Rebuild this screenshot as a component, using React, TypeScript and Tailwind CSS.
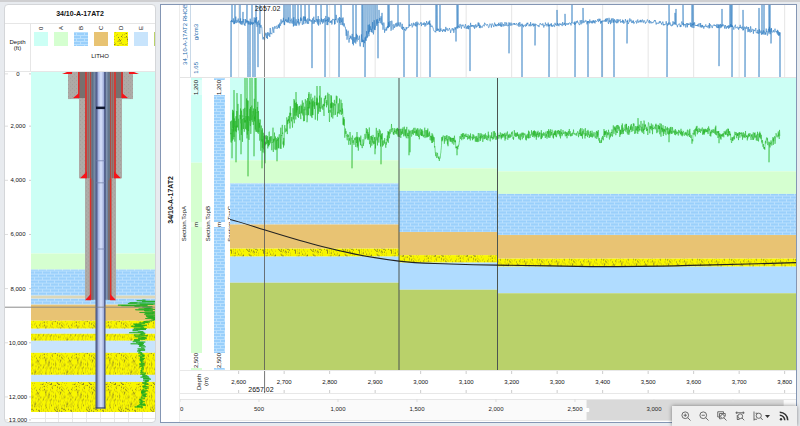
import React from "react";

type Knot = [number, number, number];
type Point = [number, number];

const COLORS = {
  teal: "#ccfff5",
  green: "#d5ffd0",
  tan: "#e8c373",
  blue: "#b0dcff",
  paleBlue: "#c8e4fc",
  olive: "#b9d16a",
};

function makeRandom(seed: number) {
  let s = seed;
  return () => {
    s = (s + 0x6d2b79f5) | 0;
    let t = Math.imul(s ^ (s >>> 15), 1 | s);
    t = (t + Math.imul(t ^ (t >>> 7), 61 | t)) ^ t;
    return ((t ^ (t >>> 14)) >>> 0) / 4294967296;
  };
}

/* Builds a log curve: noise round a baseline, plus single excursions. */
function buildLog(knots: Knot[], spikes: Point[], step: number, seed: number): Point[] {
  const rnd = makeRandom(seed);
  const pts: Point[] = [];
  const at = (p: number): Point => {
    for (let i = 1; i < knots.length; i++) {
      const [a, va, na] = knots[i - 1];
      const [b, vb, nb] = knots[i];
      if (p <= b) {
        const t = (p - a) / (b - a);
        return [va + (vb - va) * t, na + (nb - na) * t];
      }
    }
    const last = knots[knots.length - 1];
    return [last[1], last[2]];
  };
  for (let p = knots[0][0]; p <= knots[knots.length - 1][0]; p += step) {
    const [v, n] = at(p);
    pts.push([p, v + (rnd() + rnd() - 1) * n]);
  }
  for (const [p, v] of spikes) {
    pts.push([p - 0.2, at(p)[0]], [p, v], [p + 0.2, at(p)[0]]);
  }
  return pts.sort((a, b) => a[0] - b[0]);
}

const toPath = (pts: Point[], swap = false) =>
  "M" + pts.map(([a, b]) => (swap ? `${b.toFixed(1)} ${a.toFixed(1)}` : `${a.toFixed(1)} ${b.toFixed(1)}`)).join("L");

const up = (xs: number[], y = 4): Point[] => xs.map((x) => [x, y]);

const densityPath = toPath(
  buildLog(
    [
      [231, 22, 6], [258, 23, 7], [261, 30, 8], [264, 40, 7], [270, 34, 7], [277, 27, 6], [285, 21, 6], [300, 21, 6],
      [343, 20, 6], [347, 36, 8], [352, 40, 8], [364, 40, 9], [368, 32, 9], [375, 28, 10], [380, 18, 10], [385, 32, 10],
      [390, 26, 6], [400, 26, 5], [405, 30, 3], [411, 25, 3], [430, 24, 4], [434, 31, 3], [454, 30, 4], [457, 27, 4],
      [500, 25, 3], [555, 25, 3], [572, 23, 3], [610, 21, 4], [650, 22, 3], [680, 25, 4], [730, 27, 3], [750, 30, 4],
      [762, 33, 4], [770, 32, 6], [780, 33, 5],
    ],
    [
      ...up([232, 235, 240, 247, 252, 256, 260, 284, 286, 288, 290, 293, 295, 298, 301, 305, 309, 316, 321, 327, 335, 341]),
      ...up([353, 356, 362, 363, 365, 367, 369, 371, 373, 375, 377, 388, 389, 398, 409, 436, 437, 440, 457, 458]),
      ...up([572, 669, 683, 692, 693, 730, 731, 732, 762, 764, 769, 770]),
      [243, 12], [379, 10], [382, 13], [557, 10], [565, 14], [583, 8], [676, 9], [722, 9], [743, 10], [759, 8], [675, 13],
      [231, 78], [248, 78], [250, 78], [253, 78], [255, 78], [258, 68], [312, 69], [325, 78], [339, 78], [365, 78],
      [378, 59], [404, 78], [417, 78], [430, 78], [456, 42], [470, 72], [509, 54], [522, 78], [535, 46], [549, 78],
      [575, 78], [588, 78], [602, 78], [614, 78], [627, 44], [667, 78], [719, 67], [732, 78], [745, 78], [759, 78],
      [771, 44], [780, 78],
    ],
    0.4,
    17,
  ),
);

const gammaPath = toPath(
  buildLog(
    [
      [230, 130, 26], [238, 124, 24], [246, 122, 28], [258, 118, 28], [261, 138, 16], [265, 142, 14], [278, 140, 14],
      [284, 137, 14], [287, 122, 14], [292, 113, 16], [300, 112, 18], [312, 107, 17], [320, 104, 17], [332, 108, 16],
      [342, 111, 14], [346, 138, 10], [352, 139, 10], [363, 143, 10], [366, 131, 12], [372, 142, 10], [379, 135, 12],
      [386, 142, 11], [391, 130, 7], [396, 131, 7], [408, 133, 7], [412, 132, 6], [428, 134, 7], [434, 140, 7],
      [436, 155, 5], [440, 159, 5], [442, 139, 6], [455, 140, 6], [457, 150, 5], [460, 137, 5], [500, 136, 6],
      [570, 133, 6], [598, 134, 6], [600, 144, 4], [604, 134, 6], [610, 134, 6], [615, 130, 7], [640, 128, 8],
      [660, 129, 8], [666, 131, 6], [690, 133, 5], [692, 142, 4], [694, 131, 6], [716, 131, 6], [720, 136, 5],
      [730, 132, 5], [731, 142, 4], [735, 135, 5], [761, 137, 6], [764, 147, 5], [767, 137, 6], [769, 145, 5],
      [773, 140, 6], [780, 134, 6],
    ],
    [
      ...up([245, 247, 250, 252, 255, 256], 78),
      [234, 90], [237, 93], [241, 94], [232, 158], [236, 162], [241, 154], [248, 176], [254, 156], [262, 168], [265, 163],
      [277, 161], [296, 92], [309, 92], [317, 86], [320, 86], [331, 95], [352, 168], [375, 154], [381, 164], [409, 155],
      [410, 152], [448, 146], [457, 155], [638, 118], [669, 142], [719, 143], [769, 162],
    ],
    0.25,
    5,
  ),
);

const leftLogPath = toPath(
  buildLog(
    [
      [299, 150, 12], [302, 146, 26], [304, 140, 36], [307, 146, 26], [312, 150, 16], [319, 153, 8], [321, 146, 6],
      [323, 139, 9], [328, 141, 12], [333, 139, 10], [338, 143, 9], [342, 137, 10], [345, 141, 5], [360, 142, 4],
      [373, 143, 4], [378, 146, 6], [384, 145, 5], [395, 143, 5], [402, 141, 5], [405, 139, 8], [407, 141, 3],
    ],
    [],
    0.25,
    29,
  ),
  true,
);

const speckRandom = makeRandom(91);
const SPECKS = Array.from({ length: 300 }, () => [
  Math.floor(speckRandom() * 32),
  Math.floor(speckRandom() * 32),
  speckRandom() > 0.75 ? 0 : 1,
]);

function Patterns({ id }: { id: string }) {
  return (
    <defs>
      <pattern id={`${id}-brick`} width="8" height="6" patternUnits="userSpaceOnUse">
        <rect width="8" height="6" fill="#99cffb" />
        <path d="M0 .5H8M0 3.5H8M2.5 1V3M6.5 4V6" stroke="#b9e0fe" strokeWidth="1" />
      </pattern>
      <pattern id={`${id}-sand`} width="32" height="32" patternUnits="userSpaceOnUse">
        <rect width="32" height="32" fill="#f8f600" />
        {SPECKS.map(([x, y, k], i) => (
          <rect key={i} x={x} y={y} width="1" height="1" fill={k ? "#d2ca10" : "#8c861f"} />
        ))}
      </pattern>
      <linearGradient id={`${id}-pipe`}>
        <stop offset="0" stopColor="#46527c" />
        <stop offset="0.14" stopColor="#5b6898" />
        <stop offset="0.3" stopColor="#a9b8e4" />
        <stop offset="0.55" stopColor="#d9e3fb" />
        <stop offset="0.8" stopColor="#a6b4df" />
        <stop offset="0.88" stopColor="#5b6898" />
        <stop offset="1" stopColor="#46527c" />
      </linearGradient>
      <linearGradient id={`${id}-casing`}>
        <stop offset="0" stopColor="#8c8580" />
        <stop offset="0.12" stopColor="#5d7086" />
        <stop offset="0.25" stopColor="#8296b4" />
        <stop offset="0.36" stopColor="#3c4d6b" />
        <stop offset="0.64" stopColor="#3c4d6b" />
        <stop offset="0.76" stopColor="#8296b4" />
        <stop offset="0.88" stopColor="#5d7086" />
        <stop offset="1" stopColor="#8c8580" />
      </linearGradient>
      <pattern id={`${id}-cement`} width="4" height="4" patternUnits="userSpaceOnUse">
        <rect width="4" height="4" fill="#aeaaa6" />
        <path d="M0 0h1v1H0zM2 2h1v1H2z" fill="#a29e9a" />
      </pattern>
    </defs>
  );
}

const LEFT_LAYERS: [number, number, string][] = [
  [72, 253, COLORS.teal],
  [253, 269, COLORS.green],
  [269, 295, "url(#well-brick)"],
  [295, 298, "#dcd7b8"],
  [298, 304, "url(#well-brick)"],
  [304, 320, COLORS.tan],
  [320, 328, "url(#well-sand)"],
  [328, 333, COLORS.paleBlue],
  [333, 340, "url(#well-sand)"],
  [340, 352, COLORS.paleBlue],
  [352, 374, "url(#well-sand)"],
  [374, 381, COLORS.paleBlue],
  [381, 411, "url(#well-sand)"],
];

function WellSchematic() {
  return (
    <svg className="h-full min-w-0 flex-1" viewBox="31 72 124 349" preserveAspectRatio="none">
      <Patterns id="well" />
      <path d="M45.5 411V421M58.5 411V421M72.5 411V421M86.5 411V421M100.5 411V421M114.5 411V421M128.5 411V421M142.5 411V421M31 417.5H155" stroke="#e8e8e8" fill="none" />
      {LEFT_LAYERS.map(([a, b, fill]) => (
        <rect key={a} x="31" y={a} width="124" height={b - a} fill={fill} />
      ))}
      <rect x="68" y="72" width="65" height="27" fill="url(#well-cement)" />
      <rect x="79" y="72" width="43" height="106" fill="url(#well-cement)" />
      <rect x="85" y="178" width="31" height="121" fill="url(#well-cement)" />
      <rect x="78" y="72" width="45" height="26" fill="#77706e" />
      <path d="M78.8 72V98M122 72V98" stroke="#ee2320" strokeWidth="1.4" />
      <rect x="85" y="72" width="31" height="106" fill="#8a7f7b" />
      <path d="M86 72V178M115 72V178" stroke="#f0201c" strokeWidth="1.4" />
      <path d="M88.3 72V178M112.6 72V178" stroke="#9a625c" strokeWidth="1" />
      <rect x="90" y="72" width="21.5" height="227" fill="url(#well-casing)" />
      <path d="M90.6 72V178M110.6 72V178" stroke="#b5433d" strokeWidth="1" />
      <path d="M90.6 178V299M110.6 178V299" stroke="#e02f29" strokeWidth="1.6" />
      <path d="M92.6 180V299M108.8 180V299" stroke="#7c6c6c" strokeWidth="1.6" />
      <path d="M62 74L67 72H72V74ZM139 74L134 72H129V74ZM73 98L79 93V98ZM128 98L122 93V98ZM80 178L87 171V178ZM121 178L114 171V178ZM85 299.500L91 293V299.500ZM116 299.500L110 293V299.500Z" fill="#f5141a" />
      <rect x="95.500" y="72" width="10" height="335.500" fill="url(#well-pipe)" />
      <path d="M95.500 407H105.500" stroke="#3a4468" strokeWidth="1.2" />
      <rect x="96" y="106.500" width="9" height="2.500" fill="#101830" />
      <path d="M96 160.500H105M96 182.500H105M96 248.500H105" stroke="#6d7ba6" strokeWidth=".7" />
      <path d={leftLogPath} stroke="#1fae1f" strokeWidth=".7" fill="none" />
      <path d="M31 306.500H155" stroke="#7b7b7b" strokeWidth=".8" />
    </svg>
  );
}

function Brick() {
  return (
    <svg className="h-full w-full">
      <Patterns id="swatch" />
      <rect width="100%" height="100%" fill="url(#swatch-brick)" />
    </svg>
  );
}

function Sand() {
  return (
    <svg className="h-full w-full">
      <Patterns id="grain" />
      <rect width="100%" height="100%" fill="url(#grain-sand)" />
    </svg>
  );
}

const LEGEND: { name: string; box: string; fill?: React.ReactNode }[] = [
  { name: "0", box: "bg-[#ccfff5]" },
  { name: "A", box: "bg-[#d5ffd0]" },
  { name: "B", box: "bg-[#9fd3fb]", fill: <Brick /> },
  { name: "C", box: "bg-[#e8c373]" },
  { name: "D", box: "bg-[#f4f000]", fill: <Sand /> },
  { name: "E", box: "bg-[#c8e4fc]" },
  { name: "", box: "bg-[#b9d16a]" },
];

const DEPTHS_FT = [0, 2000, 4000, 6000, 8000, 10000, 12000, 13000];

function WellPanel() {
  return (
    <aside className="ml-1 flex w-[152px] shrink-0 flex-col rounded-sm border border-[#d4d6d9] bg-white">
      <h2 className="h-[19px] border-b border-[#e6e6e6] text-center text-[7px] leading-[18px] font-bold text-[#111]">34/10-A-17AT2</h2>
      <div className="flex h-12 border-b border-[#e6e6e6]">
        <div className="flex w-[26px] shrink-0 flex-col justify-center border-r border-[#e6e6e6] pb-[6px] text-center text-[6px] leading-[6px] text-[#111]">
          <span>Depth</span>
          <span>(ft)</span>
        </div>
        <div className="min-w-0 flex-1 overflow-hidden">
          <ul className="flex gap-[6px] pl-[3px]">
            {LEGEND.map((item) => (
              <li key={item.box} className="flex w-[14px] shrink-0 flex-col items-center">
                <span className="h-2 rotate-180 text-center text-[6px] leading-[14px] text-[#111] [writing-mode:vertical-rl]">
                  {item.name}
                </span>
                <span className={`h-[14px] w-[14px] overflow-hidden ${item.box}`}>{item.fill}</span>
              </li>
            ))}
          </ul>
          <p className="pt-1 pl-[14px] text-center text-[6px] leading-3 text-[#111]">LITHO</p>
        </div>
      </div>
      <div className="flex min-h-0 flex-1">
        <svg className="h-full w-[26px] shrink-0" fontSize="6" fill="#111">
          {DEPTHS_FT.map((d) => {
            const y = `${(Math.min(Math.max(d, 70), 12850) * 2.7) / 349}%`;
            return (
              <g key={d}>
                <line x1="0" x2="3" y1={y} y2={y} stroke="#ddd" />
                <line x1="24" x2="26" y1={y} y2={y} stroke="#ccc" />
                <text x="13" y={y} textAnchor="middle" dominantBaseline="central">
                  {d.toLocaleString("en-US")}
                </text>
              </g>
            );
          })}
          <line x1="0" x2="26" y1="67.2%" y2="67.2%" stroke="#8a8a8a" />
        </svg>
        <WellSchematic />
      </div>
    </aside>
  );
}

const depthX = (m: number) => `${(((m - 2581) * 0.455) / 566) * 100}%`;
const DEPTHS_M = Array.from({ length: 13 }, (_, i) => 2600 + i * 100);

function DensityTrack() {
  return (
    <div className="flex h-[73px] shrink-0 border-b border-[#e4e4e4] text-[6px] text-[#1767ab]">
      <div className="flex w-[11px] shrink-0 flex-col items-center justify-end overflow-hidden border-r border-[#c9d9e8] pb-3">
        <span className="shrink-0 rotate-180 leading-[10px] whitespace-nowrap [writing-mode:vertical-rl]">34_10-A-17AT2 RHOB</span>
      </div>
      <div className="flex w-[39px] shrink-0 flex-col justify-end gap-[22px] pb-[3px]">
        <span className="rotate-180 self-start leading-[11px] [writing-mode:vertical-rl]">g/cm3</span>
        <span className="rotate-180 self-start leading-[11px] [writing-mode:vertical-rl]">1.65</span>
      </div>
      <div className="relative min-w-0 flex-1">
        <svg className="block h-full w-full" viewBox="230 5 566 73" preserveAspectRatio="none">
          {DEPTHS_M.map((m) => (
            <path key={m} d={`M${230 + (m - 2581) * 0.455} 5V78`} stroke="#e6e6e6" />
          ))}
          <path d={densityPath} stroke="#2f7dc2" strokeWidth=".6" fill="none" />
          <path d="M264.500 5V78" stroke="#666" strokeWidth=".8" />
        </svg>
        <svg className="absolute inset-0 h-full w-full" fontSize="7" fill="#111">
          <text x={depthX(2664)} y="6" textAnchor="middle">2657.02</text>
        </svg>
      </div>
    </div>
  );
}

function ScaleStrip({ brick }: { brick?: boolean }) {
  return (
    <div className="relative w-[11px] shrink-0">
      <svg className="absolute inset-0 h-full w-full">
        {brick ? (
          <>
            <Patterns id="strip" />
            <rect width="100%" height="100%" fill="url(#strip-brick)" />
          </>
        ) : (
          <>
            <rect width="100%" height="29%" fill={COLORS.teal} />
            <rect y="29%" width="100%" height="71%" fill={COLORS.green} />
          </>
        )}
      </svg>
      <div className="relative flex h-full flex-col items-center justify-between py-[2px] text-[6px] leading-[9px] text-[#111]">
        {["1,200", "m", "2,500"].map((t) => (
          <span key={t} className={`rotate-180 py-[2px] [writing-mode:vertical-rl] ${brick || t === "2,500" ? "bg-white" : "bg-white/40"}`}>
            {t}
          </span>
        ))}
      </div>
    </div>
  );
}

const SEGMENTS: { from: number; to: number; tops: number[] }[] = [
  { from: 230, to: 399, tops: [78, 160, 183, 224, 248, 256, 282, 369] },
  { from: 399, to: 497.5, tops: [78, 168, 190.5, 231.5, 254.5, 262, 289, 369] },
  { from: 497.5, to: 796, tops: [78, 171, 193.5, 234.5, 258, 266, 292.5, 369] },
];
const SEGMENT_FILLS = [
  COLORS.teal, COLORS.green, "url(#section-brick)", COLORS.tan, "url(#section-sand)", COLORS.blue, COLORS.olive,
];

function SectionTrack() {
  return (
    <div className="flex min-h-0 flex-1 text-[6px] text-[#111]">
      <div className="flex w-[11px] shrink-0 items-center">
        <span className="rotate-180 leading-[9px] [writing-mode:vertical-rl]">Section.TopA</span>
      </div>
      <ScaleStrip />
      <div className="flex w-3 shrink-0 items-center justify-center">
        <span className="rotate-180 leading-[9px] [writing-mode:vertical-rl]">Section.TopB</span>
      </div>
      <ScaleStrip brick />
      <div className="flex w-[5px] shrink-0 items-center overflow-hidden pl-px">
        <span className="shrink-0 rotate-180 leading-[9px] [writing-mode:vertical-rl]">Section.TopC</span>
      </div>
      <svg className="h-full min-w-0 flex-1" viewBox="230 78 566 291" preserveAspectRatio="none">
        <Patterns id="section" />
        {SEGMENTS.map((seg) =>
          SEGMENT_FILLS.map((fill, i) => (
            <rect
              key={`${seg.from}-${i}`}
              x={seg.from}
              y={seg.tops[i]}
              width={seg.to - seg.from}
              height={seg.tops[i + 1] - seg.tops[i]}
              fill={fill}
            />
          )),
        )}
        <path d={gammaPath} stroke="#1fb01f" strokeWidth=".5" fill="none" />
        <path d="M264.500 78V369" stroke="#555" strokeWidth=".8" />
        <path d="M399 78V369M497.500 78V369" stroke="#4c5450" strokeWidth="1" />
        <path
          d="M230 219C242 222 252 225.500 265 229.500S310 243 322 246S345 251.500 355 253.500S380 258 399 260.500S430 262.500 450 263.300S480 264.300 497 264.500S550 265.200 577 265.700S660 265.600 703 264.500S760 263 796 262"
          stroke="#222"
          strokeWidth="1.1"
          fill="none"
        />
      </svg>
    </div>
  );
}

function DepthAxis() {
  return (
    <div className="flex h-6 shrink-0 border-y border-[#e8e8e8] text-[6px] text-[#111]">
      <div className="flex w-[46px] shrink-0 items-center justify-center">
        <span className="rotate-180 text-center leading-[7px] [writing-mode:vertical-rl]">
          Depth
          <br />
          (m)
        </span>
      </div>
      <svg className="ml-1 h-full min-w-0 flex-1 overflow-hidden" fill="#111">
        {DEPTHS_M.map((m) => (
          <g key={m}>
            <line x1={depthX(m)} x2={depthX(m)} y1="0" y2="3" stroke="#ccc" />
            <line x1={depthX(m)} x2={depthX(m)} y1="19" y2="22" stroke="#ccc" />
            <text x={depthX(m)} y="13" fontSize="6" textAnchor="middle">
              {m.toLocaleString("en-US")}
            </text>
          </g>
        ))}
        <line x1={depthX(2657)} x2={depthX(2657)} y1="0" y2="22" stroke="#777" />
        <text x={depthX(2649)} y="21" fontSize="7" textAnchor="middle">2657.02</text>
      </svg>
    </div>
  );
}

function Overview() {
  const ticks = [0, 500, 1000, 1500, 2000, 2500, 3000, 3500];
  const x = (m: number) => `${((m * 0.158) / 616) * 100}%`;
  return (
    <svg className="mt-[5px] mb-px block h-[22px] w-full shrink-0 bg-[#fafafa]" fontSize="6" fill="#222">
      <rect x="66%" width="32%" height="100%" fill="#d9d9d9" />
      <line x1="0" x2="100%" y1="0.5" y2="0.5" stroke="#e6e6e6" />
      <line x1="0" x2="100%" y1="21.5" y2="21.5" stroke="#e6e6e6" />
      {ticks.map((t) => (
        <g key={t}>
          <line x1={x(t)} x2={x(t)} y1="0" y2="3" stroke="#ddd" />
          <text x={x(t)} y="12" textAnchor={t ? "middle" : "start"}>
            {t.toLocaleString("en-US")}
          </text>
        </g>
      ))}
      <rect x="65.800%" y="9" width="4" height="4" rx="1" fill="#fff" />
    </svg>
  );
}

function Icon({ children }: { children: React.ReactNode }) {
  return (
    <svg className="h-[10px] w-[10px]" viewBox="0 0 20 20" fill="none" stroke="#555" strokeWidth="1.7">
      {children}
    </svg>
  );
}

function Toolbar() {
  const button = "flex h-5 w-[18px] items-center justify-center";
  return (
    <div className="fixed right-[3px] bottom-0 flex h-5 w-[125px] items-center bg-[#efefef] pl-[5px] shadow-[0_0_4px_rgba(0,0,0,0.45)]">
      <button className={button} aria-label="Zoom in">
        <Icon>
          <circle cx="8.500" cy="8.500" r="6.700" />
          <path d="M13.500 13.500L19 19M8.500 5.300V11.700M5.300 8.500H11.700" />
        </Icon>
      </button>
      <button className={button} aria-label="Zoom out">
        <Icon>
          <circle cx="8.500" cy="8.500" r="6.700" />
          <path d="M13.500 13.500L19 19M5.300 8.500H11.700" />
        </Icon>
      </button>
      <button className={button} aria-label="Zoom to selection">
        <Icon>
          <path d="M4 12H1.500V1.500H13V4" />
          <path d="M5 15.500V5H16.500V11M5 15.500H9" />
          <circle cx="11" cy="10.800" r="3.800" />
          <path d="M13.800 13.600L19 19" />
        </Icon>
      </button>
      <button className={button} aria-label="Fit to window">
        <Icon>
          <path d="M1 3.500H19M3.500 1V6M16.500 1V6M4.500 17V8M4 17H9" />
          <circle cx="10.500" cy="10.500" r="4.800" />
          <path d="M14 14L18.500 18.500" />
        </Icon>
      </button>
      <button className="flex h-5 w-[26px] items-center gap-[2px] pl-1" aria-label="Zoom range options">
        <Icon>
          <path d="M2 1V19M2 16.500H8M5 4.500H9" />
          <circle cx="11.500" cy="9.500" r="5.200" />
          <path d="M15.200 13.200L19.500 18" />
        </Icon>
        <svg className="h-[3px] w-[5px]" viewBox="0 0 5 3">
          <path d="M0 0H5L2.500 3Z" fill="#333" />
        </svg>
      </button>
      <button className="flex h-5 w-[18px] items-center justify-center" aria-label="Live feed">
        <svg className="h-[10px] w-[10px]" viewBox="0 0 20 20" fill="none" stroke="#333" strokeWidth="3">
          <circle cx="4" cy="16.500" r="2.400" fill="#333" stroke="none" />
          <path d="M1.500 8.500A10 10 0 0 1 11.500 18.500M1.500 2.500A16 16 0 0 1 17.500 18.500" />
        </svg>
      </button>
    </div>
  );
}

export default function App() {
  return (
    <main className="flex h-screen gap-1 overflow-hidden border-t-2 border-[#cfcfd1] bg-[#e8ebef] pt-[2px] pb-[3px] font-['Liberation_Sans',Arial,sans-serif]">
      <WellPanel />
      <section className="mr-[3px] flex min-w-0 flex-1 border border-[#8496b4] bg-white">
        <div className="flex w-[18px] shrink-0 items-center justify-center pb-7">
          <h2 className="rotate-180 text-[7px] leading-[9px] font-bold whitespace-nowrap text-[#111] [writing-mode:vertical-rl]">34/10-A-17AT2</h2>
        </div>
        <div className="flex min-w-0 flex-1 flex-col border-l border-[#ececec]">
          <DensityTrack />
          <SectionTrack />
          <DepthAxis />
          <Overview />
        </div>
      </section>
      <Toolbar />
    </main>
  );
}
